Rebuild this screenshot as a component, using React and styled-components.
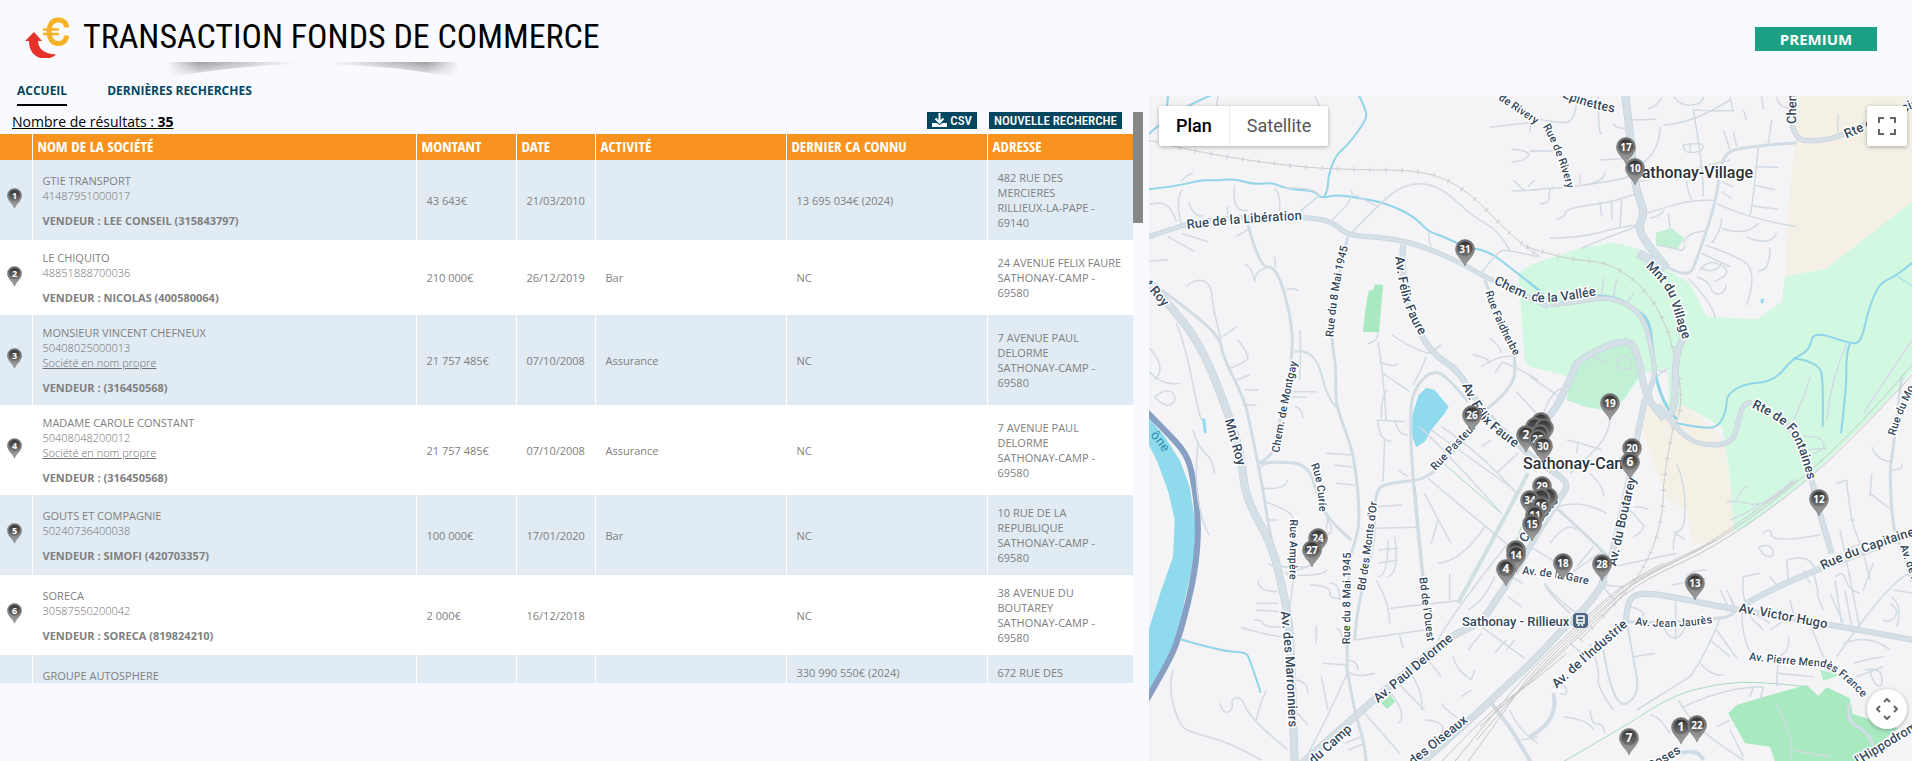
import React from 'react';
import styled, { createGlobalStyle } from 'styled-components';

const GlobalStyle = createGlobalStyle`
  * {
    box-sizing: border-box;
  }

  body {
    margin: 0;
    background: #f9faff;
    font-family: 'Open Sans', sans-serif;
    color: #000;
    overflow: hidden;
  }
`;

/* ---------- data ---------- */

const transactions = [
  { id: 1, name: 'GTIE TRANSPORT', siret: '41487951000017', seller: 'LEE CONSEIL (315843797)', amount: '43 643€', date: '21/03/2010', activity: '', revenue: '13 695 034€ (2024)', street: '482 RUE DES MERCIERES', city: 'RILLIEUX-LA-PAPE - 69140' },
  { id: 2, name: 'LE CHIQUITO', siret: '48851888700036', seller: 'NICOLAS (400580064)', amount: '210 000€', date: '26/12/2019', activity: 'Bar', revenue: 'NC', street: '24 AVENUE FELIX FAURE', city: 'SATHONAY-CAMP - 69580' },
  { id: 3, name: 'MONSIEUR VINCENT CHEFNEUX', siret: '50408025000013', own: true, seller: '(316450568)', amount: '21 757 485€', date: '07/10/2008', activity: 'Assurance', revenue: 'NC', street: '7 AVENUE PAUL DELORME', city: 'SATHONAY-CAMP - 69580' },
  { id: 4, name: 'MADAME CAROLE CONSTANT', siret: '50408048200012', own: true, seller: '(316450568)', amount: '21 757 485€', date: '07/10/2008', activity: 'Assurance', revenue: 'NC', street: '7 AVENUE PAUL DELORME', city: 'SATHONAY-CAMP - 69580' },
  { id: 5, name: 'GOUTS ET COMPAGNIE', siret: '50240736400038', seller: 'SIMOFI (420703357)', amount: '100 000€', date: '17/01/2020', activity: 'Bar', revenue: 'NC', street: '10 RUE DE LA REPUBLIQUE', city: 'SATHONAY-CAMP - 69580' },
  { id: 6, name: 'SORECA', siret: '30587550200042', seller: 'SORECA (819824210)', amount: '2 000€', date: '16/12/2018', activity: '', revenue: 'NC', street: '38 AVENUE DU BOUTAREY', city: 'SATHONAY-CAMP - 69580' },
  { id: 7, name: 'GROUPE AUTOSPHERE', revenue: '330 990 550€ (2024)', street: '672 RUE DES' },
];

// origin of each map tile; tile points are given at three units per pixel
const tiles = { a: [1148, 90], b: [1530, 0], c: [1148, 410], d: [1530, 410] };

const points = (tile, str) => {
  const [ox, oy] = tiles[tile];
  return str.split(' ').map((p) => {
    const [x, y] = p.split(',').map(Number);
    return [Math.round((ox + x / 3) * 10) / 10, Math.round((oy + y / 3) * 10) / 10];
  });
};

const area = (tile, str) => points(tile, str).map((p) => p.join(',')).join(' ');

// rounds every corner of the line; reach prolongs its last stretch
const line = (tile, str, reach = 0) => {
  const pts = points(tile, str);
  let d = `M${pts[0]}`;
  for (let i = 1; i < pts.length - 1; i++) {
    const [x, y] = pts[i];
    const [nx, ny] = i === pts.length - 2 ? pts[i + 1] : [(x + pts[i + 1][0]) / 2, (y + pts[i + 1][1]) / 2];
    d += ` Q${x},${y} ${nx},${ny}`;
  }
  if (pts.length === 2) d += ` L${pts[1]}`;
  if (reach) {
    const [[px, py], [ex, ey]] = pts.slice(-2);
    const len = Math.hypot(ex - px, ey - py);
    d += ` L${ex + ((ex - px) / len) * reach},${ey + ((ey - py) / len) * reach}`;
  }
  return d;
};

const areas = [
  ['b', '#f4f0e5', '805,280 1150,280 1150,605 885,808 765,828 775,640 795,420'],
  ['d', '#f4f0e5', '320,20 345,-20 460,-20 575,80 600,200 612,362 545,400 487,400 470,300 410,265 380,180'],
  ['b', '#d3f8e2', '-35,820 0,795 150,745 250,728 340,750 420,815 480,850 530,950 680,958 755,905 765,828 885,808 1150,603 1150,1110 1050,1225 840,1430 650,1580 612,1592 600,1430 575,1280 460,1215 415,1235 415,1105 340,1120 280,1200 240,1232 150,1215 120,1130 0,1100 -16,1080'],
  ['b', '#c1f0d5', '130,1080 290,1010 330,1090 325,1130 280,1200 240,1232 170,1222 110,1200'],
  ['b', '#c1f0d5', '378,698 425,684 462,715 440,750 378,735'],
  ['a', '#a8e9c0', '662,602 676,600 680,583 705,585 693,727 645,725 652,660'],
  ['c', '#a8e9c0', '700,880 725,852 742,875 718,897'],
  ['d', '#a8e9c0', '595,910 620,885 720,855 830,825 865,858 890,832 960,865 968,912 1105,955 1060,990 985,1055 735,1055 720,1010 645,1000'],
  ['d', '#b4edca', '870,780 930,795 880,812'],
  ['a', '#90daee', '835,893 860,900 902,950 890,970 850,1020 830,1055 805,1072 793,1040 793,975 812,915'],
  ['c', '#90daee', '0,20 50,80 95,150 125,230 142,340 138,450 110,570 90,680 60,760 0,870 0,665 40,540 75,440 80,330 62,250 30,160 0,100'],
  ['c', '#90daee', '162,25 172,27 176,68 168,70'],
  ['b', '#90daee', '692,898 702,895 700,910 692,910'],
];

const streams = [
  ['a', 2, '0,134 60,80 118,48 190,15'],
  ['a', 2, '60,15 57,60'],
  ['a', 2, '0,298 90,288 160,269 200,272 260,266 320,284 370,277 420,298 500,302 515,322 535,322 565,314 640,325 715,340 800,380 840,425 890,440 950,472 1020,482 1090,535 1175,602'],
  ['a', 2, '632,15 655,60 655,90 600,165 563,195 540,260 540,300 528,322'],
  ['b', 2, '-10,840 40,885'],
  ['b', 3, '190,888 250,885 320,930 358,960 368,1050 375,1130 410,1230 440,1258'],
  ['b', 2, '1150,785 1100,828 1048,848 1015,930 1000,1000 985,1030 960,1030 848,993 840,1050 790,1075 730,1145 640,1152 590,1185 590,1225 565,1285 500,1282 440,1270'],
  ['b', 1, '1100,828 1150,860'],
  ['b', 2, '790,1075 870,1085 880,1160 878,1280'],
  ['b', 2, '960,1030 948,1060 950,1160 933,1300'],
  ['c', 2, '97,688 225,725 290,725 305,745 338,848'],
];

const minorRoads = [
  ['a', '85,395 65,320 0,345'], ['a', '105,300 80,320 100,405'], ['a', '122,335 135,380 165,378'], ['a', '260,285 255,320 270,365 300,360'],
  ['a', '380,295 398,310 395,365'], ['a', '237,350 240,375'], ['a', '455,365 510,320'], ['a', '550,392 625,325 610,300'],
  ['a', '605,435 690,345 770,280 870,283 980,385 1050,420 1085,480'], ['a', '620,315 690,350'], ['a', '845,425 838,440 850,470'],
  ['a', '1000,550 1050,480 1085,482 1170,500'], ['a', '60,440 140,485'], ['a', '100,430 180,455'], ['a', '265,440 300,418'], ['a', '0,512 60,510'],
  ['a', '320,575 310,525 290,525'], ['a', '320,575 320,545 350,535'], ['a', '380,500 383,530'], ['a', '115,590 140,565 190,580 195,660 220,750'],
  ['a', '90,95 95,95 98,160'], ['a', '98,275 110,258 135,250'], ['a', '85,700 110,760 150,960 160,990'], ['a', '0,770 60,830 20,870'], ['a', '0,840 40,890 95,880'],
  ['a', '20,920 60,890 90,930 50,955 20,920'], ['a', '225,740 265,710'], ['a', '245,835 300,815 300,790 270,750'], ['a', '265,870 305,855'], ['a', '290,900 330,900'],
  ['a', '285,945 325,945'], ['a', '455,870 460,780 455,720'], ['a', '415,600 430,590 450,602'], ['a', '415,905 505,905'], ['a', '425,920 475,922'], ['a', '465,985 460,950 440,950'],
  ['a', '660,760 690,755 690,728'], ['a', '690,755 705,840 715,990'], ['a', '732,735 780,770 840,790'], ['a', '840,790 880,765'], ['a', '835,800 820,840 795,885'],
  ['a', '695,815 740,835 750,820'], ['a', '705,850 785,905'], ['a', '700,985 700,910 720,900'], ['a', '975,795 1030,805 1020,820'], ['a', '1000,830 1060,790 1105,800'],
  ['a', '1060,820 1040,850'], ['a', '1060,815 1105,830 1170,870'], ['a', '1105,905 1170,975'], ['a', '1025,745 1060,770 1060,790'], ['a', '1025,112 1170,95'],
  ['a', '1090,178 1150,182 1130,215 1090,215'], ['a', '1150,182 1170,183'], ['a', '1090,303 1170,300'], ['a', '1095,270 1130,303'], ['a', '1140,290 1160,270'],
  ['a', '210,18 205,50'], ['a', '500,18 515,50'], ['a', '410,295 500,290 515,318'],
  ['b', '0,395 0,350 60,365 140,370 140,290'], ['b', '0,453 70,453'], ['b', '205,290 205,415 215,400'], ['b', '250,370 255,385 285,385'], ['b', '300,360 380,358'],
  ['b', '210,480 310,475'], ['b', '310,510 390,465 390,380'], ['b', '355,325 375,325 395,295'], ['b', '430,290 455,320 520,310 520,290'], ['b', '400,375 490,370 600,300'],
  ['b', '490,330 520,500 520,590'], ['b', '490,330 600,335 610,330'], ['b', '600,290 610,335'], ['b', '695,290 700,330'], ['b', '740,290 745,325 785,325'], ['b', '640,330 650,360'],
  ['b', '460,435 520,425 520,455 460,460 460,435'], ['b', '480,435 480,460'], ['b', '325,545 560,490 600,480'], ['b', '350,640 400,625 480,600 560,600'], ['b', '470,540 470,570 485,598'],
  ['b', '560,610 650,655 800,680'], ['b', '575,575 605,595'], ['b', '575,545 610,560'], ['b', '660,650 670,600 685,440'], ['b', '675,500 745,502'], ['b', '672,555 735,570'], ['b', '668,618 745,628'],
  ['b', '580,390 600,450'], ['b', '610,395 620,440'], ['b', '715,430 725,360'], ['b', '575,655 575,690 545,730'], ['b', '575,685 650,710 685,670'], ['b', '650,712 720,740 740,700'],
  ['b', '720,742 720,815 685,812'], ['b', '525,735 600,760 685,810 650,915'], ['b', '515,760 600,800'], ['b', '510,810 530,780 590,800 590,830 550,845'], ['b', '500,830 540,845 545,880 580,885 590,855'],
  ['b', '510,805 555,825 575,790'], ['b', '460,730 465,715 495,695 530,692'], ['b', '380,735 440,745 460,755 465,735'], ['b', '420,685 415,640'], ['b', '360,655 400,645 400,630'],
  ['b', '0,570 130,562 290,535 310,525'], ['b', '70,560 55,570 60,610 30,612'], ['b', '150,550 150,525'], ['b', '160,555 225,545 225,515'],
  ['b', '80,660 105,650 108,625 260,605 320,580'], ['b', '60,715 160,712 270,680 330,675'], ['b', '270,680 275,600'], ['b', '210,605 215,650'], ['b', '245,605 245,660'], ['b', '155,745 220,715 320,680'],
  ['b', '180,890 100,880'], ['b', '215,890 220,835'], ['b', '250,890 260,840'], ['b', '290,910 310,880'], ['b', '925,400 920,370 925,340'], ['b', '475,835 555,920 555,955'],
  ['b', '0,1130 95,1195'], ['b', '40,1240 75,1150 110,1170'], ['b', '385,1110 390,1115 410,1115'], ['b', '1146,1020 1000,1240'], ['b', '840,1130 820,1200 790,1260'], ['b', '950,1030 900,1150 890,1260'],
  ['b', '380,1130 400,1110 415,1105'], ['b', '260,1090 275,1060 310,1080 300,1115 260,1100'], ['b', '175,1060 230,1090'],
  ['c', '135,60 150,110 195,150 200,190'], ['c', '150,100 140,200 160,330 183,375'], ['c', '345,235 415,240 418,210'], ['c', '355,330 390,330'], ['c', '352,275 420,300 440,330 440,500 425,590'],
  ['c', '330,180 350,150 420,155'], ['c', '535,130 615,135'], ['c', '560,165 620,172'], ['c', '565,220 620,225'], ['c', '535,325 550,345 550,370 530,380'], ['c', '540,328 535,355'],
  ['c', '360,460 380,475 480,470'], ['c', '410,490 470,478 495,460'], ['c', '415,495 530,500 535,480'], ['c', '330,510 330,545 390,545'], ['c', '325,580 390,580'], ['c', '325,600 400,605'],
  ['c', '318,630 345,630 345,650 400,652'], ['c', '280,652 330,670 400,680'], ['c', '485,525 545,525 545,570 580,565'], ['c', '545,520 575,515 575,570'], ['c', '505,645 505,700'],
  ['c', '565,655 580,655 582,690'], ['c', '525,760 595,765'], ['c', '597,750 630,752 630,780'], ['c', '600,785 540,920 470,1053'], ['c', '600,785 625,805 680,790'], ['c', '520,800 540,900'],
  ['c', '445,810 480,815 480,850'], ['c', '75,780 60,830 95,950 140,970 250,1000 340,1050'], ['c', '215,880 225,912 255,900 250,865 280,860 310,930 420,1020'], ['c', '355,840 335,880 325,930'],
  ['c', '445,905 480,945'], ['c', '690,30 690,90 730,95'], ['c', '685,30 770,35'], ['c', '710,90 705,215'], ['c', '740,30 750,75 780,75'], ['c', '750,180 780,200'],
  ['c', '680,290 765,285'], ['c', '680,355 805,352'], ['c', '720,390 720,500 690,500'], ['c', '740,380 755,490 720,500'], ['c', '690,420 750,415'], ['c', '690,460 750,450'], ['c', '685,510 725,580 725,640'],
  ['c', '725,595 930,572'], ['c', '620,690 830,660'], ['c', '755,675 765,715'], ['c', '815,50 910,140 1060,310'], ['c', '840,205 940,290 1075,400'], ['c', '850,60 1100,240'], ['c', '880,50 1000,130 1105,250'],
  ['c', '1045,190 1110,130'], ['c', '1000,110 1030,90'], ['c', '870,460 940,455 1010,350'], ['c', '905,490 905,570'], ['c', '830,250 870,330 910,400'], ['c', '870,330 850,400'],
  ['c', '870,690 920,600 1080,400'], ['c', '1000,650 1130,745'], ['c', '960,600 1010,570 1040,500'], ['c', '1080,560 1120,590'], ['c', '1090,500 1125,520'], ['c', '1040,730 1075,690'], ['c', '1075,720 1100,690'], ['c', '960,720 1000,670'],
  ['c', '915,740 925,780 970,810'], ['c', '970,810 980,780'], ['c', '840,750 880,800'], ['c', '790,790 830,860 820,900'], ['c', '730,850 780,920 750,940'], ['c', '750,820 830,900'], ['c', '650,910 755,1030'],
  ['c', '830,930 900,935 880,970'], ['c', '880,880 900,910 950,935'], ['c', '940,860 970,840'], ['c', '1085,900 1110,960 1170,1000'], ['c', '600,1020 650,1000'], ['c', '590,1000 640,980'], ['c', '1120,990 1170,980'],
  ['d', '110,90 140,95 215,120'], ['d', '145,95 140,130'], ['d', '240,20 240,60 190,130 120,190'], ['d', '180,190 225,235 220,260'], ['d', '60,300 140,260 230,310'], ['d', '0,410 100,470'],
  ['d', '140,470 190,410'], ['d', '60,400 110,330 140,360'], ['d', '110,500 220,420'], ['d', '310,290 350,290 355,300'], ['d', '310,380 340,365 340,350'], ['d', '300,300 345,350'],
  ['d', '440,160 465,220 465,360 430,365 430,420'], ['d', '430,365 465,390'], ['d', '250,470 440,430'], ['d', '425,525 530,505'], ['d', '465,520 465,480 530,480'], ['d', '280,530 210,525'],
  ['d', '45,520 60,550 140,610'], ['d', '140,610 220,520'], ['d', '220,530 260,580'], ['d', '310,740 375,730'], ['d', '300,590 345,600 340,620'], ['d', '180,700 210,780 200,830 250,900'], ['d', '120,700 180,750'],
  ['d', '400,640 405,670 435,688 460,670 470,640'], ['d', '437,575 437,688'], ['d', '635,610 640,710 670,735'], ['d', '570,625 530,730 480,800'], ['d', '510,760 545,800 580,795'], ['d', '540,690 600,740'],
  ['d', '560,660 620,745'], ['d', '480,800 400,850 320,900'], ['d', '570,540 600,600'], ['d', '590,540 615,590'], ['d', '600,560 610,590'], ['d', '640,500 635,560 650,590'], ['d', '640,500 690,490'],
  ['d', '690,410 720,400 735,440 700,440 685,410'], ['d', '700,370 720,350 730,400 870,375'], ['d', '770,450 775,510'], ['d', '770,450 840,430 855,480'], ['d', '720,500 745,530'], ['d', '820,480 840,520'], ['d', '850,480 865,550'],
  ['d', '780,570 790,610'], ['d', '860,550 880,600'], ['d', '900,550 940,640'], ['d', '720,660 780,620'], ['d', '660,620 700,660'], ['d', '690,620 720,640'], ['d', '775,680 780,720 740,740 740,830'],
  ['d', '835,630 870,720 890,760'], ['d', '745,790 850,800'], ['d', '930,360 960,500 990,660'], ['d', '950,210 960,330 1000,420 1020,510'], ['d', '960,330 975,330'], ['d', '920,220 950,210'],
  ['d', '940,420 1000,400'], ['d', '915,500 940,480 955,540 990,550'], ['d', '915,510 935,640'], ['d', '945,540 965,650'], ['d', '1030,460 1000,540'], ['d', '920,740 1080,510 1140,490'],
  ['d', '1090,540 1146,550'], ['d', '1085,560 1120,590 1100,650'], ['d', '1080,580 1110,600 1080,640 1060,630'], ['d', '970,760 1020,745 1060,740'], ['d', '1000,780 1050,770 1060,830 1030,825 1020,780'],
  ['d', '980,800 1060,770'], ['d', '940,700 1020,670 1080,720'], ['d', '1025,110 1040,150 1080,155'], ['d', '1080,180 1125,180 1115,160'], ['d', '1020,250 1085,300'], ['d', '1025,190 1020,260'],
  ['d', '590,275 620,270 680,290 760,250 790,210'], ['d', '620,270 630,240 650,230'], ['d', '600,330 700,290 790,210'], ['d', '820,80 870,75 890,120 850,130'], ['d', '820,120 890,115'],
  ['d', '740,880 760,930 790,1000 780,1050'], ['d', '790,1020 860,1035 900,1040'], ['d', '445,870 460,900 530,980 640,1050'], ['d', '460,890 590,830 700,830'], ['d', '360,915 385,915 420,970'],
  ['d', '600,960 640,1040'], ['d', '560,950 600,930'], ['d', '670,830 660,860'], ['d', '700,830 690,870'], ['d', '100,920 180,930 190,960'], ['d', '180,900 185,945 220,940 225,970'], ['d', '70,830 110,820 110,860 90,850'],
];

const streets = [
  ['a', 3, '0,570 110,650 215,740 225,800 290,930 305,1000 330,1120 350,1230 360,1300 375,1370'],
  ['a', 3, '600,440 560,600 548,740 565,830 562,930 580,990 620,1100 637,1290 620,1360 600,1420 597,1740'],
  ['c', 3, '597,780 620,910 650,1000 655,1060'],
  ['a', 3, '1010,570 1060,690 1105,800 1095,900 1000,970'],
  ['a', 3, '960,935 900,860 850,840 795,900 785,990 795,1170 815,1380 840,1600 850,1650'],
  ['c', 3, '795,212 840,205 900,140 980,60'],
  ['c', 3, '795,212 710,218 680,250 680,400 650,500 625,620 620,690'],
  ['c', 3, '330,160 380,155 480,162 510,260 540,330 610,390'],
  ['a', 3, '300,405 335,535 385,528 430,680 435,800 400,960 380,1105 330,1118'],
  ['a', 2, '440,785 500,775 540,930 565,950'],
  ['b', 3, '410,800 475,835 500,780 560,600 575,460 650,440 800,428'],
  ['d', 3, '620,600 600,620 565,625 420,640 290,635'],
  ['d', 2, '290,635 310,740 330,860 250,900 220,720'],
  ['d', 4, '70,850 90,930 0,980'],
  ['d', 3, '1115,-100 1090,120 1078,180 1090,370 1120,420 1146,520'],
  ['d', 3, '75,290 220,420 250,460'],
  ['c', 4, '1030,880 1085,950 1115,1000 1150,1060'],
  ['d', 3, '960,880 945,930 1020,970 1030,1010'],
  ['d', 4, '400,1050 500,1000 520,1050'],
  ['d', 2, '45,520 45,540 120,610'],
];

const avenues = [
  ['a', 4, '-10,445 100,405 200,388 360,378 470,382 550,392 600,438 720,442 830,470 950,525 1010,560 1100,600 1200,650'],
  ['b', 4, '60,915 140,905 230,890 300,915 345,960 365,1050 378,1130 345,1195 400,1260'],
  ['a', 7, '-10,565 90,670 170,790 240,970 280,1090 290,1220 370,1360 400,1480 425,1600 430,1720 440,2020'],
  ['a', 5, '765,465 760,540 790,680 850,790 930,840 975,920 1040,1000 1160,1110 1240,1160 1260,1185 1240,1220 1150,1360 1100,1450'],
  ['c', 6, '450,1070 620,920 700,850 900,680 1000,640 1050,560 1080,520 1110,440'],
  ['b', 6, '-20,1320 60,1260 125,1130 140,1080 290,1012 325,1060 345,1190 400,1250 436,1240 436,1030 475,1000'],
  ['c', 6, '820,1060 1010,890 1050,850 1170,740 1240,660 1330,580 1370,510'],
  ['b', 5, '345,1195 325,1290 310,1380 270,1560 240,1690 215,1750'],
  ['b', 7, '285,280 300,400 312,530 325,590 345,640 320,690 390,780 410,805'],
  ['b', 8, '325,760 405,805'],
  ['b', 4, '785,370 795,415 840,425 940,410 1060,340'],
  ['d', 4, '385,-15 440,60 510,108 610,100 625,30 640,-20 665,-25'],
  ['d', 5, '740,10 800,70 840,180 865,300 905,430'],
  ['d', 5, '288,640 290,580 320,548 400,555 620,600 880,640 1150,690'],
  ['d', 5, '640,585 720,540 870,475 1150,370'],
];

const rails = [
  ['a', '0,150 150,188 435,230 620,240 830,240 960,300 1100,450 1175,500'],
  ['b', '-10,740 100,778 230,785 330,850 400,950 440,1080 460,1230 430,1290'],
  ['d', '430,50 400,200 400,300 370,420 300,540 150,690'],
];

const tracks = [
  ['d', '-130,930 0,820 240,590 340,510 560,410 840,210 1060,-10 1150,-110'],
  ['d', '-150,950 0,812 230,590 330,500 560,400 840,190 1040,-10 1150,-140'],
  ['d', '-160,990 0,800 220,590 330,505 560,395 800,210'],
  ['d', '-190,1060 -80,910 0,790 220,580 330,495 560,390'],
  ['d', '-230,1060 -100,900 0,780 200,590 300,510 400,460'],
  ['d', '-270,1060 -120,900 0,825 110,730'],
];

const greenLines = [
  ['c', '880,155 1060,310'],
  ['c', '802,230 818,420 828,500'],
  ['c', '1120,350 1100,410'],
  ['d', '100,1055 300,940 420,860 560,820 700,815 830,830'],
];

const labels = [
  ['a', 13, '118,417 280,396 470,389', 'Rue de la Libération'],
  ['a', 11, '556,742 566,600 600,470', 'Rue du 8 Mai 1945'],
  ['a', 13, '742,500 750,580 780,680 820,745', 'Av. Félix Faure'],
  ['a', 13, '1036,580 1130,630 1210,642 1350,615', 'Chem. de la Vallée'],
  ['a', 11, '1012,606 1040,700 1100,800', 'Rue Faidherbe'],
  ['a', 13, '-45,540 10,612 70,680', 'Mnt Roy'],
  ['a', 11, '394,1088 410,980 448,815', 'Chem. de Montgay'],
  ['a', 13, '942,885 980,970 1040,1030 1110,1080', 'Av. Félix Faure'],
  ['a', 11, '1050,28 1150,95', 'de Rivery'],
  ['b', 13, '96,292 170,325 255,338', 'Épinettes'],
  ['b', 11, '38,380 80,450 110,560', 'Rue de Rivery'],
  ['b', 13, '798,372 799,270', 'Chem.'],
  ['b', 13, '950,415 1020,385 1150,325', 'Rte de Vancia'],
  ['b', 13, '346,800 410,860 430,930 456,1010', 'Mnt du Village'],
  ['b', 13, '664,1222 750,1262 800,1320 825,1410', 'Rte de Fontaines'],
  ['b', 11, '1095,1308 1115,1240 1160,1150', 'Rue du Mo'],
  ['c', 13, '230,30 268,165', 'Mnt Roy'],
  ['c', 11, '488,165 512,220 512,295', 'Rue Curie'],
  ['c', 11, '426,328 424,510', 'Rue Ampère'],
  ['c', 11, '606,703 608,430', 'Rue du 8 Mai 1945'],
  ['c', 11, '650,543 670,420 688,270', "Bd des Monts d'Or"],
  ['c', 11, '814,503 826,600 838,695', "Bd de l'Ouest"],
  ['c', 11, '862,183 980,58', 'Rue Pasteur'],
  ['c', 13, '398,605 414,720 422,950', 'Av. des Marronniers'],
  ['c', 13, '690,880 915,690', 'Av. Paul Delorme'],
  ['c', 13, '450,1105 620,955', 'Av. du Camp'],
  ['c', 13, '735,1115 960,935', 'Rue des Oiseaux'],
  ['c', 11, '1122,492 1220,500 1325,525', 'Av. de la Gare'],
  ['c', 13, '1132,400 1250,250', 'Confrérie'],
  ['d', 13, '258,470 290,320 318,205', 'Av. du Boutarey'],
  ['d', 13, '880,480 980,430 1150,378', 'Rue du Capitaine'],
  ['d', 13, '625,606 740,626 895,656', 'Av. Victor Hugo'],
  ['d', 11, '315,644 420,660 548,638', 'Av. Jean Jaurès'],
  ['d', 13, '80,836 180,745 290,650', "Av. de l'Industrie"],
  ['d', 11, '656,750 820,768 910,770 990,855', 'Av. Pierre Mendès France'],
  ['d', 11, '1110,408 1145,510', 'Av. de l’E'],
  ['d', 13, '985,1065 1150,965', "l'Hippodrome"],
  ['d', 13, '300,1120 425,1045', 'des Roses'],
];

const pins = [
  [1626, 147, 17], [1635, 168, 10], [1465, 249, 31], [1610, 403, 19], [1472, 415, 26],
  [1541, 422], [1535, 427], [1544, 428], [1540, 434], [1526, 435, 2], [1538, 439, 25], [1543, 446, 30],
  [1632, 448, 20], [1630, 462, 6], [1542, 486, 29], [1548, 497], [1541, 498], [1530, 500, 34], [1541, 506, 16],
  [1535, 515, 11], [1532, 524, 15], [1819, 499, 12], [1318, 538, 24], [1312, 550, 27], [1516, 550], [1516, 555, 14],
  [1506, 569, 4], [1563, 563, 18], [1602, 564, 28], [1695, 583, 13], [1681, 727, 1], [1697, 725, 22], [1629, 738, 7],
];

/* ---------- styles ---------- */

const Page = styled.div`
  display: flex;
  flex-direction: column;
  height: 100vh;
`;

const Header = styled.header`
  display: flex;
  justify-content: space-between;
  align-items: flex-start;
  height: 75px;
  padding: 12px 35px 0 24px;
`;

const Brand = styled.div`
  display: flex;
  align-items: center;
  gap: 12px;
  height: 48px;
`;

const TitleBlock = styled.div`
  position: relative;
`;

const Title = styled.h1`
  margin: 0;
  font-family: 'Roboto Condensed', 'Open Sans Condensed', sans-serif;
  font-size: 34px;
  line-height: 48px;
  font-weight: 400;
  white-space: nowrap;
`;

const TitleShadow = styled.svg`
  position: absolute;
  left: 84px;
  top: 50px;
`;

const Premium = styled.button`
  margin-top: 15px;
  width: 122px;
  height: 24px;
  padding: 0;
  border: 0;
  background: #1aa183;
  color: #fff;
  font: 700 15px/24px 'Open Sans', sans-serif;
`;

const Body = styled.main`
  flex: 1;
  display: grid;
  grid-template-columns: 1149fr 763fr;
  min-height: 0;
`;

const Results = styled.section`
  min-width: 0;
`;

const Nav = styled.nav`
  display: flex;
  gap: 40px;
  height: 37px;
  padding: 5px 17px 0;
`;

const NavLink = styled.a`
  height: 26px;
  font-size: 12px;
  line-height: 22px;
  font-weight: 700;
  color: #02465f;
  text-decoration: none;
  border-bottom: 2px solid ${(props) => (props.$active ? '#000' : 'transparent')};
`;

const Scroller = styled.div`
  display: flex;
  height: 75vh;
  padding-right: 6px;
`;

const ScrollContent = styled.div`
  flex: 1;
  min-width: 0;
  overflow: hidden;
`;

const ScrollThumb = styled.div`
  width: 10px;
  height: 111px;
  background: #888;
`;

const Toolbar = styled.div`
  display: flex;
  align-items: flex-start;
  gap: 12px;
  height: 22px;
  padding: 0 11px 0 12px;
`;

const Count = styled.div`
  margin-right: auto;
  font-size: 14px;
  line-height: 20px;
  text-decoration: underline;
`;

const ToolButton = styled.button`
  display: flex;
  align-items: center;
  gap: 3px;
  height: 17px;
  padding: 0 5px;
  border: 0;
  background: #02465f;
  color: #fff;
  font: 500 13px/17px 'Roboto Condensed', 'Open Sans Condensed', sans-serif;
`;

const Table = styled.table`
  width: 100%;
  table-layout: fixed;
  border-collapse: collapse;
  color: #808080;
  font-size: 11px;
  line-height: 15px;
`;

const Col = styled.col`
  width: ${(props) => props.$width};
`;

const Th = styled.th`
  height: 26px;
  padding: 0 5px 2px;
  background: #f7931e;
  color: #fff;
  font: 700 15px/20px 'Open Sans Condensed', 'Open Sans', sans-serif;
  text-align: left;
  white-space: nowrap;

  & + & {
    border-left: 1px solid #fff;
  }
`;

const Row = styled.tr`
  background: #fff;

  &:nth-child(odd) {
    background: #e0ebf3;
  }
`;

const Td = styled.td`
  padding: 10px;
  vertical-align: middle;

  & + & {
    border-left: 1px solid #fff;
  }
`;

const PinCell = styled.td`
  padding: 0 0 3px 7px;

  & + ${Td} {
    border-left: 1px solid #fff;
  }
`;

const RowPin = styled.svg`
  display: block;
`;

const Siret = styled.div`
  min-height: 15px;
  color: #707070;
  font-weight: 300;
`;

const OwnName = styled.a`
  color: #707070;
  font-weight: 300;
  text-decoration: underline;
`;

const Seller = styled.div`
  min-height: 15px;
  margin-top: 10px;
  font-weight: 700;
`;

const Details = styled.div`
  min-height: ${(props) => props.$lines * 15}px;
`;

const MapPanel = styled.section`
  position: relative;
  margin-top: 21px;
  overflow: hidden;
  background: #f4f3f5;
`;

const MapDrawing = styled.svg`
  display: block;
  width: 100%;
  height: 100%;
  font-family: 'Roboto', sans-serif;
`;

const MapTypes = styled.div`
  position: absolute;
  top: 10px;
  left: 10px;
  display: flex;
  height: 40px;
  background: #fff;
  border-radius: 2px;
  box-shadow: 0 1px 4px rgba(0, 0, 0, 0.3);
`;

const MapType = styled.button`
  padding: 0 17px;
  border: 0;
  background: none;
  color: ${(props) => (props.$active ? '#000' : '#565656')};
  font: ${(props) => (props.$active ? 500 : 400)} 18px/40px 'Roboto', sans-serif;

  & + & {
    border-left: 1px solid #ebebeb;
  }
`;

const MapControl = styled.button`
  position: absolute;
  right: 5px;
  ${(props) => (props.$round ? 'bottom: 32px;' : 'top: 10px;')}
  display: flex;
  align-items: center;
  justify-content: center;
  width: 40px;
  height: 40px;
  padding: 0;
  border: 0;
  border-radius: ${(props) => (props.$round ? '50%' : '2px')};
  background: #fff;
  box-shadow: 0 1px 4px rgba(0, 0, 0, 0.3);
`;

/* ---------- components ---------- */

const Logo = () => (
  <svg width="47" height="44" viewBox="0 0 47 44" aria-hidden="true">
    <path d="M42.5 13.500 C42.500 8 38 5.500 33.500 6 C28 6.500 25 11 25 17.500 C25 24 28 29 33.500 29.500 C38.500 30 42.500 27 42.500 21.500" fill="none" stroke="#f5b227" strokeWidth="5" />
    <path d="M19 15.500 H35 M19 20 H35" stroke="#f5b227" strokeWidth="2.500" />
    <path d="M1 27 L10 18 L18 27 H14 C14.500 35 20 40 32 40.500 C24 48 5 46 5 27 Z" fill="#e5322a" />
  </svg>
);

const PinShape = ({ label }) => (
  <>
    <path d="M0 17 C-2 11 -9.500 7 -9.500 0 A9.500 9.500 0 0 1 9.500 0 C9.500 7 2 11 0 17 Z" fill="url(#pinBody)" stroke="#666" strokeWidth="0.500" />
    <circle r="7.500" fill="url(#pinDisc)" />
    {label && (
      <text y="4" textAnchor="middle" fontFamily="Open Sans, sans-serif" fontWeight="700" fontSize={label > 9 ? 10 : 12} fill="#fff">
        {label}
      </text>
    )}
  </>
);

const PinDefs = () => (
  <defs>
    <linearGradient id="pinBody" x1="0" y1="0" x2="0" y2="1">
      <stop offset="0" stopColor="#6c6c6c" />
      <stop offset="1" stopColor="#a0a0a0" />
    </linearGradient>
    <linearGradient id="pinDisc" x1="0" y1="0" x2="0" y2="1">
      <stop offset="0" stopColor="#333" />
      <stop offset="1" stopColor="#777" />
    </linearGradient>
  </defs>
);

const CityMap = () => (
  <MapDrawing viewBox="1149 96 763 665" preserveAspectRatio="xMidYMid slice">
    <PinDefs />
    {areas.map(([tile, fill, pts], i) => (
      <polygon key={i} points={area(tile, pts)} fill={fill} />
    ))}
    <g fill="none" strokeLinejoin="round">
      <path d={line('c', '-10,0 50,60 115,130 135,200 152,330 145,460 120,580 90,690 60,760 -10,880')} stroke="#869fc3" strokeWidth="6" />
      {streams.map(([tile, w, pts], i) => (
        <path key={i} d={line(tile, pts)} stroke="#90d5e8" strokeWidth={w} />
      ))}
      {greenLines.map(([tile, pts], i) => (
        <path key={i} d={line(tile, pts)} stroke="#a6dcc0" />
      ))}
      <path d={line('c', '1140,190 1040,380 930,580')} stroke="#d0e0e0" strokeWidth="4" />
      {minorRoads.map(([tile, pts], i) => (
        <path key={i} d={line(tile, pts)} stroke="#d2dbe4" strokeWidth="1.500" />
      ))}
      {rails.map(([tile, pts], i) => (
        <g key={i} stroke="#cbcdd0">
          <path d={line(tile, pts)} />
          <path d={line(tile, pts)} strokeWidth="5" strokeDasharray="1 15" />
        </g>
      ))}
      {streets.map(([tile, w, pts], i) => (
        <path key={i} d={line(tile, pts)} stroke="#d2dce4" strokeWidth={w} />
      ))}
      {avenues.map(([tile, w, pts], i) => (
        <path key={i} d={line(tile, pts)} stroke="#c2cfda" strokeWidth={w + 1} />
      ))}
      {avenues.map(([tile, w, pts], i) => (
        <path key={i} d={line(tile, pts)} stroke="#d5dfe6" strokeWidth={w} />
      ))}
      {tracks.map(([tile, pts], i) => (
        <path key={i} d={line(tile, pts)} stroke="#c6c7c9" />
      ))}
    </g>
    <g fill="#33475c" fontWeight="500" stroke="#fff" strokeWidth="3" strokeLinejoin="round" paintOrder="stroke">
      {labels.map(([tile, size, pts, text], i) => (
        <React.Fragment key={i}>
          <path id={`street${i}`} d={line(tile, pts, 40)} fill="none" stroke="none" />
          <text fontSize={size}>
            <textPath href={`#street${i}`}>{text}</textPath>
          </text>
        </React.Fragment>
      ))}
      <text x="1462" y="626" fontSize="13">Sathonay - Rillieux</text>
      <text x="1632" y="178" fontSize="16" fill="#2a3038">Sathonay-Village</text>
      <text x="1523" y="469" fontSize="16" fill="#2a3038">Sathonay-Camp</text>
    </g>
    <path id="river" d="M1150 436 Q1158 442 1168 462" fill="none" />
    <text fontSize="13" fill="#2b8fa8">
      <textPath href="#river">ône</textPath>
    </text>
    <rect x="1573" y="613" width="15" height="15" rx="4" fill="#4c6580" />
    <path d="M1577 616h7v7h-7z M1578 626l1.500-2 M1583 626l-1.500-2" fill="none" stroke="#fff" strokeWidth="1.500" />
    <path d="M1577 620h7" stroke="#fff" strokeWidth="1.500" />
    {pins.map(([x, y, label], i) => (
      <g key={i} transform={`translate(${x} ${y})`}>
        <PinShape label={label} />
      </g>
    ))}
  </MapDrawing>
);

const TransactionRow = ({ item }) => (
  <Row>
    <PinCell>
      {item.siret && (
        <RowPin width="15" height="21" viewBox="-10 -10 20 28">
          <PinShape label={item.id} />
        </RowPin>
      )}
    </PinCell>
    <Td>
      <div>{item.name}</div>
      <Siret>{item.siret}</Siret>
      {item.own && <OwnName href="#societe">Société en nom propre</OwnName>}
      <Seller>{item.seller && `VENDEUR : ${item.seller}`}</Seller>
    </Td>
    <Td>{item.amount}</Td>
    <Td>{item.date}</Td>
    <Td>{item.activity}</Td>
    <Td>
      <Details $lines={item.siret ? 1 : 4}>{item.revenue}</Details>
    </Td>
    <Td>
      <Details $lines={item.siret ? 1 : 4}>
        {item.street}
        <br />
        {item.city}
      </Details>
    </Td>
  </Row>
);

const App = () => {
  return (
    <Page>
      <GlobalStyle />
      <Header>
        <Brand>
          <Logo />
          <TitleBlock>
            <Title>TRANSACTION FONDS DE COMMERCE</Title>
            <TitleShadow width="292" height="16" viewBox="0 0 292 16">
              <defs>
                <linearGradient id="liftX">
                  <stop offset="0" stopColor="#777" stopOpacity="0" />
                  <stop offset="0.110" stopColor="#777" stopOpacity="0.700" />
                  <stop offset="0.440" stopColor="#777" stopOpacity="0" />
                  <stop offset="0.560" stopColor="#777" stopOpacity="0" />
                  <stop offset="0.890" stopColor="#777" stopOpacity="0.700" />
                  <stop offset="1" stopColor="#777" stopOpacity="0" />
                </linearGradient>
                <linearGradient id="liftY" x1="0" y1="0" x2="0" y2="1">
                  <stop offset="0" stopColor="#fff" />
                  <stop offset="1" stopColor="#000" />
                </linearGradient>
                <mask id="liftMask">
                  <path d="M0 0 H292 V16 Q146 -12 0 16 Z" fill="url(#liftY)" />
                </mask>
              </defs>
              <rect width="292" height="16" fill="url(#liftX)" mask="url(#liftMask)" />
            </TitleShadow>
          </TitleBlock>
        </Brand>
        <Premium type="button">PREMIUM</Premium>
      </Header>
      <Body>
        <Results>
          <Nav>
            <NavLink href="#accueil" $active>ACCUEIL</NavLink>
            <NavLink href="#recherches">DERNIÈRES RECHERCHES</NavLink>
          </Nav>
          <Scroller>
            <ScrollContent>
              <Toolbar>
                <Count>
                  Nombre de résultats : <b>35</b>
                </Count>
                <ToolButton type="button">
                  <svg width="15" height="15" viewBox="0 0 15 15" aria-hidden="true">
                    <path d="M7.500 0 V9 M3.500 5.500 L7.500 9.500 L11.500 5.500" fill="none" stroke="#fff" strokeWidth="2" />
                    <path d="M0 10 H4.500 L7.500 12 L10.500 10 H15 V14 H0 Z" fill="#fff" />
                  </svg>
                  CSV
                </ToolButton>
                <ToolButton type="button">NOUVELLE RECHERCHE</ToolButton>
              </Toolbar>
              <Table>
                <colgroup>
                  <Col $width="32px" />
                  <Col />
                  <Col $width="100px" />
                  <Col $width="79px" />
                  <Col $width="191px" />
                  <Col $width="201px" />
                  <Col $width="146px" />
                </colgroup>
                <thead>
                  <tr>
                    <Th />
                    <Th>NOM DE LA SOCIÉTÉ</Th>
                    <Th>MONTANT</Th>
                    <Th>DATE</Th>
                    <Th>ACTIVITÉ</Th>
                    <Th>DERNIER CA CONNU</Th>
                    <Th>ADRESSE</Th>
                  </tr>
                </thead>
                <tbody>
                  {transactions.map((item) => (
                    <TransactionRow key={item.id} item={item} />
                  ))}
                </tbody>
              </Table>
            </ScrollContent>
            <ScrollThumb />
          </Scroller>
        </Results>
        <MapPanel>
          <CityMap />
          <MapTypes>
            <MapType type="button" $active>Plan</MapType>
            <MapType type="button">Satellite</MapType>
          </MapTypes>
          <MapControl type="button" aria-label="Plein écran">
            <svg width="18" height="18" viewBox="0 0 18 18">
              <path d="M1 6 V1 H6 M12 1 H17 V6 M17 12 V17 H12 M6 17 H1 V12" fill="none" stroke="#666" strokeWidth="2" />
            </svg>
          </MapControl>
          <MapControl type="button" aria-label="Déplacer" $round>
            <svg width="22" height="22" viewBox="0 0 22 22">
              <path d="M8 4 L11 1 L14 4 M18 8 L21 11 L18 14 M14 18 L11 21 L8 18 M4 14 L1 11 L4 8" fill="none" stroke="#666" strokeWidth="2" />
            </svg>
          </MapControl>
        </MapPanel>
      </Body>
    </Page>
  );
};

export default App;
